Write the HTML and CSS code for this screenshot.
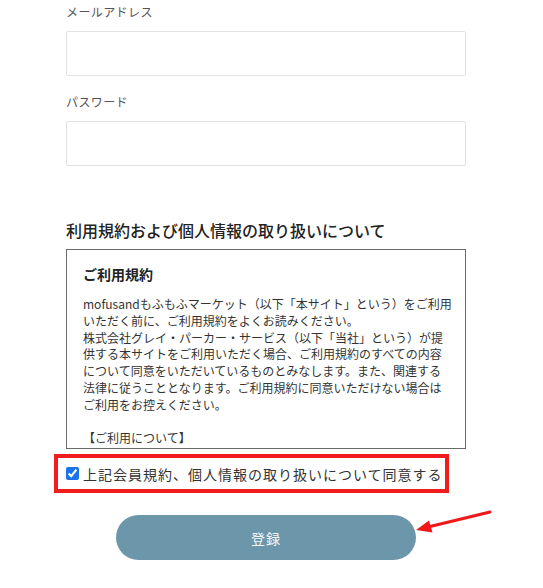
FILE: index.html
```html
<!DOCTYPE html>
<html lang="ja">
<head>
  <meta charset="UTF-8">
  <meta name="viewport" content="width=device-width, initial-scale=1.0">
  <title>会員登録</title>
  <link rel="stylesheet" href="styles.css">
</head>
<body>
  <div class="form-wrap">
    <!-- メール -->
    <div class="field">
      <label class="field-label" for="email">メールアドレス</label>
      <input class="field-input" type="email" id="email">
    </div>
    <!-- パスワード -->
    <div class="field">
      <label class="field-label" for="password">パスワード</label>
      <input class="field-input" type="password" id="password">
    </div>

    <h2 class="terms-title">利用規約および個人情報の取り扱いについて</h2>
    <div class="terms-box">
      <h3 class="terms-heading">ご利用規約</h3>
      <p class="terms-text">mofusandもふもふマーケット（以下「本サイト」という）をご利用いただく前に、ご利用規約をよくお読みください。<br>株式会社グレイ・パーカー・サービス（以下「当社」という）が提供する本サイトをご利用いただく場合、ご利用規約のすべての内容について同意をいただいているものとみなします。また、関連する法律に従うこととなります。ご利用規約に同意いただけない場合はご利用をお控えください。</p>
      <p class="terms-text">【ご利用について】</p>
    </div>

    <label class="agree">
      <input type="checkbox" class="agree-check" checked>
      <span class="agree-text">上記会員規約、個人情報の取り扱いについて同意する</span>
    </label>

    <div class="submit-row">
      <button class="submit-btn" type="button">登録</button>
    </div>
  </div>

  <!-- 注釈の矢印 -->
  <svg class="note-arrow" width="80" height="34" viewBox="0 0 80 34">
    <line x1="76" y1="6" x2="16" y2="20.5" stroke="#f01818" stroke-width="3" stroke-linecap="round"/>
    <polygon points="2,24 15,14.5 18.5,26.5" fill="#f01818"/>
  </svg>
</body>
</html>
```

FILE: styles.css
```css
* {margin: 0; padding: 0; box-sizing: border-box;}
body {
  font-family: "Noto Sans CJK JP", "Noto Sans", sans-serif;
  color: #333;
  background: #fff;
}
.form-wrap {
  width: 400px;
  margin-left: 66px;
  padding-top: 3px;
}
.field {
  margin-bottom: 17px;
}
.field-label {
  display: block;
  font-size: 12px;
  line-height: 18px;
  letter-spacing: 0.4px;
  color: #555;
  margin-bottom: 10px;
}
.field-input {
  display: block;
  width: 100%;
  height: 45px;
  border: 1px solid #e2e2e2;
  border-radius: 2px;
  background: #fff;
}
.terms-title {
  /* 上の .field の margin と相殺されるので合計値 */
  margin-top: 52px;
  font-size: 16px;
  font-weight: 500;
  line-height: 24px;
  color: #222;
}
.terms-box {
  margin-top: 7px;
  height: 200px;
  border: 1px solid #6a6a6a;
  padding: 14px 12px 14px 16px;
  overflow: hidden;
}
.terms-heading {
  font-size: 14px;
  font-weight: 700;
  line-height: 20px;
  margin-bottom: 12px;
  color: #222;
}
.terms-text {
  font-size: 12px;
  line-height: 16.8px;
  color: #333;
  margin-bottom: 16px;
}
.agree {
  display: flex;
  align-items: center;
  width: 395px;
  height: 39px;
  margin-top: 5px;
  margin-left: -12px;
  padding-left: 8px;
  border: 4px solid #f11c1c;
  cursor: pointer;
}
.agree-check {
  width: 13px;
  height: 13px;
  margin: 0 4px 0 0;
  accent-color: #1a73e8;
}
.agree-text {
  font-size: 14px;
  letter-spacing: 1px;
  color: #333;
}
.submit-row {
  display: flex;
  justify-content: center;
  margin-top: 22px;
}
.submit-btn {
  width: 300px;
  height: 45px;
  border: none;
  border-radius: 23px;
  background: #6c96aa;
  color: #f4f7f9;
  font-family: inherit;
  font-size: 14px;
  letter-spacing: 1px;
}
.note-arrow {
  position: absolute;
  left: 414px;
  top: 506px;
}
```
